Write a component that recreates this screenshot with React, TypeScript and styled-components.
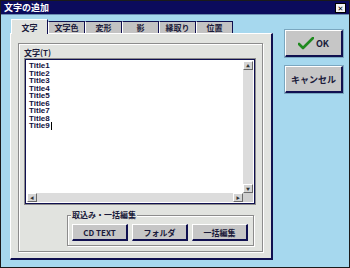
import React from 'react';
import styled, { createGlobalStyle } from 'styled-components';

const tabs = ['文字', '文字色', '変形', '影', '縁取り', '位置'];
const lines = ['Title1', 'Title2', 'Title3', 'Title4', 'Title5', 'Title6', 'Title7', 'Title8', 'Title9'];

export default function App() {
  return (
    <>
      <GlobalStyle />
      <Window>
        <TitleBar>
          <TitleText>文字の追加</TitleText>
          <CloseButton>✕</CloseButton>
        </TitleBar>
        <Body>
          <LeftColumn>
            <TabRow>
              {tabs.map((t, i) => (
                <Tab key={t} $active={i === 0}>{t}</Tab>
              ))}
            </TabRow>
            <Panel>
              <Frame>
                <FieldLabel>文字(T)</FieldLabel>
                <TextBox>
                  <TextRow>
                    <TextArea>
                      {lines.map((l, i) => (
                        <Line key={l}>
                          {l}
                          {i === lines.length - 1 && <Caret />}
                        </Line>
                      ))}
                    </TextArea>
                    <VScroll>
                      <ArrowButton>▲</ArrowButton>
                      <Track />
                      <ArrowButton>▼</ArrowButton>
                    </VScroll>
                  </TextRow>
                  <HScrollRow>
                    <HScroll>
                      <ArrowButton>◀</ArrowButton>
                      <Track />
                      <ArrowButton>▶</ArrowButton>
                    </HScroll>
                    <Corner />
                  </HScrollRow>
                </TextBox>
                <GroupBox>
                  <GroupLegend>取込み・一括編集</GroupLegend>
                  <GroupButton>CD TEXT</GroupButton>
                  <GroupButton>フォルダ</GroupButton>
                  <GroupButton>一括編集</GroupButton>
                </GroupBox>
              </Frame>
            </Panel>
          </LeftColumn>
          <RightColumn>
            <SideButton>
              <svg width="16" height="13" viewBox="0 0 16 13">
                <path d="M1 7 L5 11 L15 1" fill="none" stroke="#1f8a1f" strokeWidth="2.6" strokeLinecap="round" strokeLinejoin="round" />
              </svg>
              OK
            </SideButton>
            <SideButton>キャンセル</SideButton>
          </RightColumn>
        </Body>
      </Window>
    </>
  );
}

const GlobalStyle = createGlobalStyle`
  body {
    margin: 0;
    font-family: "Noto Sans CJK JP", "DejaVu Sans", sans-serif;
  }
`;

const Window = styled.div`
  width: 350px;
  height: 268px;
  box-sizing: border-box;
  border: 1px solid #1a1a1a;
  background: #a6d8ee;
  display: flex;
  flex-direction: column;
`;

const TitleBar = styled.div`
  height: 13px;
  background: #0b0b5c;
  border-bottom: 1px solid #6a8cb0;
  display: flex;
  align-items: center;
  justify-content: space-between;
  padding: 0 3px 0 3px;
`;

const TitleText = styled.span`
  color: #fff;
  font-size: 9px;
  font-weight: bold;
  line-height: 13px;
`;

const CloseButton = styled.span`
  width: 9px;
  height: 8px;
  background: #f4f4f4;
  color: #000;
  font-size: 7px;
  font-weight: bold;
  line-height: 8px;
  text-align: center;
  border: 1px solid #000;
`;

const Body = styled.div`
  flex: 1;
  display: flex;
`;

const LeftColumn = styled.div`
  margin-left: 9px;
  padding-top: 3px;
  width: 264px;
  display: flex;
  flex-direction: column;
`;

const TabRow = styled.div`
  height: 15px;
  display: flex;
  align-items: flex-end;
  padding-left: 1px;
`;

const Tab = styled.div<{ $active?: boolean }>`
  width: 37px;
  height: ${p => (p.$active ? 15 : 12)}px;
  box-sizing: border-box;
  font-size: 8px;
  font-weight: bold;
  color: #1a1a3a;
  display: flex;
  align-items: center;
  justify-content: center;
  border-top: 1px solid ${p => (p.$active ? '#fff' : '#101050')};
  border-left: 1px solid #fff;
  border-right: 1px solid #101050;
  background: ${p => (p.$active ? '#e1e3df' : '#c3c3c3')};
  background-image: ${p =>
    p.$active ? 'none' : 'radial-gradient(#a8a8a8 0.6px, transparent 0.7px)'};
  background-size: 2px 2px;
  margin-bottom: ${p => (p.$active ? -1 : 0)}px;
  position: relative;
  z-index: ${p => (p.$active ? 1 : 0)};
`;

const Panel = styled.div`
  width: 263px;
  height: 227px;
  box-sizing: border-box;
  background: #e1e3df;
  border-top: 1px solid #fff;
  border-left: 1px solid #fff;
  border-right: 2px solid #101050;
  border-bottom: 2px solid #101050;
  padding: 9px 9px 6px 7px;
  display: flex;
`;

const Frame = styled.div`
  flex: 1;
  border: 1px solid #8c8c8c;
  box-shadow: inset 1px 1px 0 #fff, 1px 1px 0 #fff;
  padding: 3px 6px 0 5px;
  display: flex;
  flex-direction: column;
`;

const FieldLabel = styled.div`
  font-size: 8px;
  font-weight: bold;
  color: #1a1a3a;
  line-height: 11px;
`;

const TextBox = styled.div`
  height: 147px;
  box-sizing: border-box;
  border: 1px solid #8c8c8c;
  box-shadow: inset 1px 1px 0 #101050, inset -1px -1px 0 #101050;
  padding: 2px;
  display: flex;
  flex-direction: column;
  background: #fff;
`;

const TextRow = styled.div`
  flex: 1;
  display: flex;
`;

const TextArea = styled.div`
  flex: 1;
  padding: 1px 2px;
  font-family: "Liberation Sans", Arial, sans-serif;
  font-size: 8px;
  font-weight: bold;
  color: #101040;
`;

const Line = styled.div`
  line-height: 7.5px;
  height: 7.5px;
`;

const Caret = styled.span`
  display: inline-block;
  width: 1px;
  height: 8px;
  background: #000;
  vertical-align: top;
  margin-left: 1px;
`;

const VScroll = styled.div`
  width: 10px;
  display: flex;
  flex-direction: column;
`;

const HScrollRow = styled.div`
  height: 9px;
  display: flex;
`;

const HScroll = styled.div`
  flex: 1;
  display: flex;
`;

const ArrowButton = styled.div`
  width: 10px;
  height: 9px;
  box-sizing: border-box;
  background: #d4d4d4;
  border-top: 1px solid #fff;
  border-left: 1px solid #fff;
  border-right: 1px solid #6a6a6a;
  border-bottom: 1px solid #6a6a6a;
  font-size: 4px;
  color: #333;
  display: flex;
  align-items: center;
  justify-content: center;
  flex-shrink: 0;
`;

const Track = styled.div`
  flex: 1;
  background: #dcdcdc;
  background-image: radial-gradient(#c4c4c4 0.6px, transparent 0.7px);
  background-size: 2px 2px;
`;

const Corner = styled.div`
  width: 10px;
  background: #cfcfcf;
`;

const GroupBox = styled.div`
  margin: 10px 2px 0 43px;
  height: 31px;
  box-sizing: border-box;
  border: 1px solid #8c8c8c;
  box-shadow: inset 1px 1px 0 #fff, 1px 1px 0 #fff;
  position: relative;
  display: flex;
  gap: 4px;
  padding: 8px 5px 0 4px;
`;

const GroupLegend = styled.span`
  position: absolute;
  top: -6px;
  left: 3px;
  padding: 0 1px;
  background: #e1e3df;
  font-size: 8px;
  font-weight: bold;
  color: #1a1a3a;
  line-height: 10px;
`;

const GroupButton = styled.div`
  width: 56px;
  height: 17px;
  box-sizing: border-box;
  background: #c6c6c6;
  border-top: 1px solid #fff;
  border-left: 1px solid #fff;
  border-right: 2px solid #101050;
  border-bottom: 2px solid #101050;
  font-size: 8px;
  font-weight: bold;
  color: #1a1a3a;
  display: flex;
  align-items: center;
  justify-content: center;
`;

const RightColumn = styled.div`
  margin-left: 11px;
  padding-top: 15px;
  display: flex;
  flex-direction: column;
  gap: 9px;
`;

const SideButton = styled.div`
  width: 58px;
  height: 27px;
  box-sizing: border-box;
  background: #c6c6c6;
  border-top: 1px solid #fff;
  border-left: 1px solid #fff;
  border-right: 2px solid #101050;
  border-bottom: 2px solid #101050;
  box-shadow: 0 0 0 1px #7aa7c0;
  font-size: 9px;
  font-weight: bold;
  color: #1a1a3a;
  display: flex;
  align-items: center;
  justify-content: center;
  gap: 2px;
`;
